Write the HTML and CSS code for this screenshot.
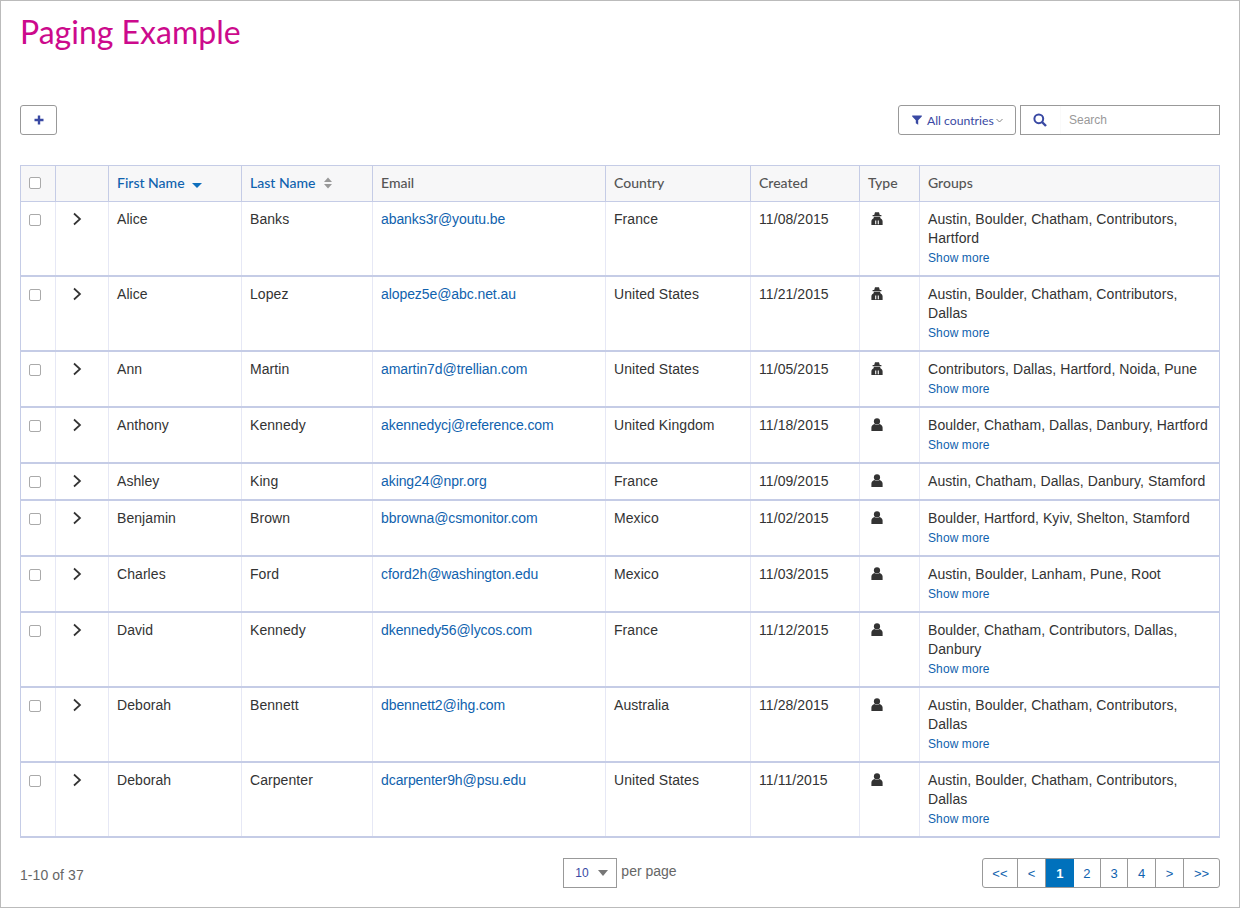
FILE: index.html
```html
<!DOCTYPE html>
<html lang="en">
<head>
    <meta charset="UTF-8">
    <title>Paging Example</title>
    <link rel="stylesheet" href="styles.css">
</head>
<body>
<svg class="defs" width="0" height="0">
    <symbol id="chev" viewBox="0 0 10 14"><path d="M2 1.5 L8 7 L2 12.5" fill="none" stroke="#333" stroke-width="1.7"/></symbol>
    <symbol id="user" viewBox="0 0 12 13"><circle cx="6" cy="3.4" r="3.1" fill="#333"/><path d="M0.4 13 V9.6 C0.4 7.6 2 6.3 3.4 6 C4.8 7.2 7.2 7.2 8.6 6 C10 6.3 11.6 7.6 11.6 9.6 V13 Z" fill="#333"/></symbol>
    <symbol id="secret" viewBox="0 0 12 13"><path d="M4 0.2 H8 L8.8 3 H10.4 V4.2 H1.6 V3 H3.2 Z" fill="#333"/><path d="M3 4.8 H9 L9.6 6.4 C11 6.8 11.6 8 11.6 9.4 V13 H0.4 V9.4 C0.4 8 1 6.8 2.4 6.4 Z" fill="#333"/><path d="M4 8.4 H5.3 V12.2 H4 Z M6.7 8.4 H8 V12.2 H6.7 Z" fill="#ddd"/></symbol>
</svg>

<div class="page">
    <h1 class="title">Paging Example</h1>

    <div class="toolbar">
        <button class="btn btn-add">
            <svg width="10" height="10" viewBox="0 0 10 10"><path d="M3.8 0.5 H6.2 V3.8 H9.5 V6.2 H6.2 V9.5 H3.8 V6.2 H0.5 V3.8 H3.8 Z" fill="#3949a3"/></svg>
        </button>
        <div class="toolbar-right">
            <button class="btn btn-filter">
                <svg width="10" height="10" viewBox="0 0 10 10"><path d="M0.2 0.5 H9.8 V1.6 L6.2 5.2 V9.8 L3.8 8.2 V5.2 L0.2 1.6 Z" fill="#3949a3"/></svg>
                <span>All countries</span>
                <svg class="filter-caret" width="7" height="5" viewBox="0 0 7 5"><path d="M0.5 1 L3.5 4 L6.5 1" fill="none" stroke="#777" stroke-width="0.9"/></svg>
            </button>
            <div class="search">
                <span class="search-icon">
                    <svg width="14" height="14" viewBox="0 0 14 14"><circle cx="5.8" cy="5.8" r="4.4" fill="none" stroke="#3949a3" stroke-width="2"/><path d="M9 9 L13 13" stroke="#3949a3" stroke-width="2.4"/></svg>
                </span>
                <span class="search-text">Search</span>
            </div>
        </div>
    </div>

    <table class="users">
        <colgroup>
            <col class="c-check"><col class="c-expand"><col class="c-first"><col class="c-last"><col class="c-email"><col class="c-country"><col class="c-created"><col class="c-type"><col>
        </colgroup>
        <thead>
            <tr>
                <th><span class="check"></span></th>
                <th></th>
                <th class="sortable">First Name <svg class="sort" width="10" height="5" viewBox="0 0 10 5"><path d="M0 0 H10 L5 5 Z" fill="#0f6fbd"/></svg></th>
                <th class="sortable">Last Name <svg class="sort-both" width="10" height="12" viewBox="0 0 10 12"><path d="M1 5 L5 0.5 L9 5 Z M1 7 H9 L5 11.5 Z" fill="#999"/></svg></th>
                <th>Email</th>
                <th>Country</th>
                <th>Created</th>
                <th>Type</th>
                <th>Groups</th>
            </tr>
        </thead>
        <tbody>
            <tr>
                <td><span class="check"></span></td>
                <td class="expand"><svg width="10" height="14"><use href="#chev"/></svg></td>
                <td>Alice</td><td>Banks</td>
                <td><a href="#">abanks3r@youtu.be</a></td>
                <td>France</td><td>11/08/2015</td>
                <td><svg class="type" width="12" height="13"><use href="#secret"/></svg></td>
                <td>Austin, Boulder, Chatham, Contributors, Hartford<a class="more" href="#">Show more</a></td>
            </tr>
            <tr>
                <td><span class="check"></span></td>
                <td class="expand"><svg width="10" height="14"><use href="#chev"/></svg></td>
                <td>Alice</td><td>Lopez</td>
                <td><a href="#">alopez5e@abc.net.au</a></td>
                <td>United States</td><td>11/21/2015</td>
                <td><svg class="type" width="12" height="13"><use href="#secret"/></svg></td>
                <td>Austin, Boulder, Chatham, Contributors, Dallas<a class="more" href="#">Show more</a></td>
            </tr>
            <tr>
                <td><span class="check"></span></td>
                <td class="expand"><svg width="10" height="14"><use href="#chev"/></svg></td>
                <td>Ann</td><td>Martin</td>
                <td><a href="#">amartin7d@trellian.com</a></td>
                <td>United States</td><td>11/05/2015</td>
                <td><svg class="type" width="12" height="13"><use href="#secret"/></svg></td>
                <td>Contributors, Dallas, Hartford, Noida, Pune<a class="more" href="#">Show more</a></td>
            </tr>
            <tr>
                <td><span class="check"></span></td>
                <td class="expand"><svg width="10" height="14"><use href="#chev"/></svg></td>
                <td>Anthony</td><td>Kennedy</td>
                <td><a href="#">akennedycj@reference.com</a></td>
                <td>United Kingdom</td><td>11/18/2015</td>
                <td><svg class="type" width="12" height="13"><use href="#user"/></svg></td>
                <td>Boulder, Chatham, Dallas, Danbury, Hartford<a class="more" href="#">Show more</a></td>
            </tr>
            <tr>
                <td><span class="check"></span></td>
                <td class="expand"><svg width="10" height="14"><use href="#chev"/></svg></td>
                <td>Ashley</td><td>King</td>
                <td><a href="#">aking24@npr.org</a></td>
                <td>France</td><td>11/09/2015</td>
                <td><svg class="type" width="12" height="13"><use href="#user"/></svg></td>
                <td>Austin, Chatham, Dallas, Danbury, Stamford</td>
            </tr>
            <tr>
                <td><span class="check"></span></td>
                <td class="expand"><svg width="10" height="14"><use href="#chev"/></svg></td>
                <td>Benjamin</td><td>Brown</td>
                <td><a href="#">bbrowna@csmonitor.com</a></td>
                <td>Mexico</td><td>11/02/2015</td>
                <td><svg class="type" width="12" height="13"><use href="#user"/></svg></td>
                <td>Boulder, Hartford, Kyiv, Shelton, Stamford<a class="more" href="#">Show more</a></td>
            </tr>
            <tr>
                <td><span class="check"></span></td>
                <td class="expand"><svg width="10" height="14"><use href="#chev"/></svg></td>
                <td>Charles</td><td>Ford</td>
                <td><a href="#">cford2h@washington.edu</a></td>
                <td>Mexico</td><td>11/03/2015</td>
                <td><svg class="type" width="12" height="13"><use href="#user"/></svg></td>
                <td>Austin, Boulder, Lanham, Pune, Root<a class="more" href="#">Show more</a></td>
            </tr>
            <tr>
                <td><span class="check"></span></td>
                <td class="expand"><svg width="10" height="14"><use href="#chev"/></svg></td>
                <td>David</td><td>Kennedy</td>
                <td><a href="#">dkennedy56@lycos.com</a></td>
                <td>France</td><td>11/12/2015</td>
                <td><svg class="type" width="12" height="13"><use href="#user"/></svg></td>
                <td>Boulder, Chatham, Contributors, Dallas, Danbury<a class="more" href="#">Show more</a></td>
            </tr>
            <tr>
                <td><span class="check"></span></td>
                <td class="expand"><svg width="10" height="14"><use href="#chev"/></svg></td>
                <td>Deborah</td><td>Bennett</td>
                <td><a href="#">dbennett2@ihg.com</a></td>
                <td>Australia</td><td>11/28/2015</td>
                <td><svg class="type" width="12" height="13"><use href="#user"/></svg></td>
                <td>Austin, Boulder, Chatham, Contributors, Dallas<a class="more" href="#">Show more</a></td>
            </tr>
            <tr>
                <td><span class="check"></span></td>
                <td class="expand"><svg width="10" height="14"><use href="#chev"/></svg></td>
                <td>Deborah</td><td>Carpenter</td>
                <td><a href="#">dcarpenter9h@psu.edu</a></td>
                <td>United States</td><td>11/11/2015</td>
                <td><svg class="type" width="12" height="13"><use href="#user"/></svg></td>
                <td>Austin, Boulder, Chatham, Contributors, Dallas<a class="more" href="#">Show more</a></td>
            </tr>
        </tbody>
    </table>

    <div class="footer">
        <div class="count">1-10 of 37</div>
        <div class="per-page">
            <div class="select"><span>10</span><i class="caret"></i></div>
            <span class="per-label">per page</span>
        </div>
        <div class="pager">
            <a href="#" class="p-first">&lt;&lt;</a>
            <a href="#" class="p-prev">&lt;</a>
            <a href="#" class="p-num active">1</a>
            <a href="#" class="p-num">2</a>
            <a href="#" class="p-num">3</a>
            <a href="#" class="p-num">4</a>
            <a href="#" class="p-prev">&gt;</a>
            <a href="#" class="p-first">&gt;&gt;</a>
        </div>
    </div>
</div>
</body>
</html>
```

FILE: styles.css
```css
html, body { margin: 0; padding: 0; }
body {
    font-family: "Liberation Sans", Arial, sans-serif;
    font-size: 14px;
    line-height: 19px;
    color: #333;
    background: #fff;
}
a { color: #0f62ae; text-decoration: none; }
.defs { position: absolute; }

.page {
    box-sizing: border-box;
    width: 1240px;
    height: 908px;
    padding: 0 19px;
    border: 1px solid #bbb;
    overflow: hidden;
}
.title {
    margin: 0;
    padding: 10px 0 0;
    height: 92px;
    box-sizing: border-box;
    font-family: "Lato", sans-serif;
    font-weight: 400;
    font-size: 32px;
    line-height: 42px;
    color: #cc0a8c;
}

.toolbar {
    display: flex;
    justify-content: space-between;
    height: 30px;
    margin-top: 12px;
    margin-bottom: 30px;
}
.toolbar-right { display: flex; gap: 4px; }
.btn {
    display: flex;
    align-items: center;
    justify-content: center;
    box-sizing: border-box;
    height: 30px;
    padding: 0;
    background: #fff;
    border: 1px solid #999;
    border-radius: 3px;
}
.btn-add { width: 37px; }
.btn-filter {
    justify-content: flex-start;
    width: 118px;
    padding-left: 13px;
    gap: 5px;
    font-family: "Lato", sans-serif;
    font-size: 12.2px;
    color: #3949a3;
}
.filter-caret { margin-left: -3px; }
.search {
    display: flex;
    box-sizing: border-box;
    width: 200px;
    height: 30px;
    border: 1px solid #999;
}
.search-icon {
    display: flex;
    align-items: center;
    justify-content: center;
    width: 38px;
    padding-right: 1px;
    border-right: 1px solid #fafafa;
}
.search-text {
    padding-left: 8px;
    font-size: 12px;
    line-height: 28px;
    color: #999;
}

.users {
    box-sizing: border-box;
    width: 1200px;
    table-layout: fixed;
    border-collapse: collapse;
    border: 1px solid #c5cce6;
}
.c-check { width: 35px; }
.c-expand { width: 53px; }
.c-first { width: 133px; }
.c-last { width: 131px; }
.c-email { width: 233px; }
.c-country { width: 145px; }
.c-created { width: 109px; }
.c-type { width: 60px; }

.users th {
    height: 36px;
    box-sizing: border-box;
    padding: 0 8px 2px;
    background: #f7f7f8;
    border: 1px solid #c5cce6;
    font-family: "Lato", sans-serif;
    font-size: 14px;
    font-weight: 500;
    text-align: left;
    color: #555;
}
.users th.sortable { color: #0f62ae; }
.sort { margin-left: 4px; vertical-align: 0; }
.sort-both { margin-left: 4px; vertical-align: -1px; }

.users td {
    padding: 8px 8px;
    border-left: 1px solid #e6e8f5;
    border-right: 1px solid #e6e8f5;
    border-bottom: 2px solid #c5cce6;
    vertical-align: top;
    letter-spacing: 0.07px;
}
.users td:first-child { border-left-color: #c5cce6; }
.users td:last-child { border-right-color: #c5cce6; }
.users td a { letter-spacing: -0.08px; }
.users td a.more { letter-spacing: 0.1px; }
.check {
    display: block;
    box-sizing: border-box;
    width: 12px;
    height: 12px;
    margin-top: 4px;
    background: #fff;
    border: 1px solid #aaa;
    border-radius: 2px;
}
th .check { margin-top: 0; }
.expand svg { display: block; margin: 2px 0 0 8px; }
.type { display: block; margin-top: 2px; margin-left: 3px; }
.more { display: block; font-size: 12px; padding-top: 1px; margin-bottom: -1px; }

.footer {
    display: grid;
    grid-template-columns: 1fr auto 1fr;
    margin-top: 20px;
    align-items: start;
}
.count { margin-top: 8px; color: #666; letter-spacing: 0.07px; }
.per-page { display: flex; align-items: flex-start; gap: 4px; }
.select {
    display: flex;
    align-items: center;
    justify-content: space-between;
    box-sizing: border-box;
    width: 54px;
    height: 30px;
    padding: 0 8px 0 11px;
    border: 1px solid #999;
    font-size: 12px;
    color: #3949a3;
}
.caret {
    width: 0;
    height: 0;
    border-left: 5px solid transparent;
    border-right: 5px solid transparent;
    border-top: 6px solid #777;
}
.per-label { color: #666; margin-top: 4px; }
.pager {
    display: flex;
    justify-self: end;
    box-sizing: border-box;
    width: 238px;
    height: 30px;
    border: 1px solid #999;
    border-radius: 3px;
    font-size: 13px;
}
.pager a {
    display: flex;
    align-items: center;
    justify-content: center;
    box-sizing: border-box;
    border-right: 1px solid #999;
}
.pager a:last-child { border-right: 0; }
.p-first { width: 35px; }
.p-prev { width: 28.4px; }
.p-num { width: 27.6px; }
.pager a.active {
    background: #0071bc;
    color: #fff;
    font-weight: bold;
    border-right: 0;
}
```
